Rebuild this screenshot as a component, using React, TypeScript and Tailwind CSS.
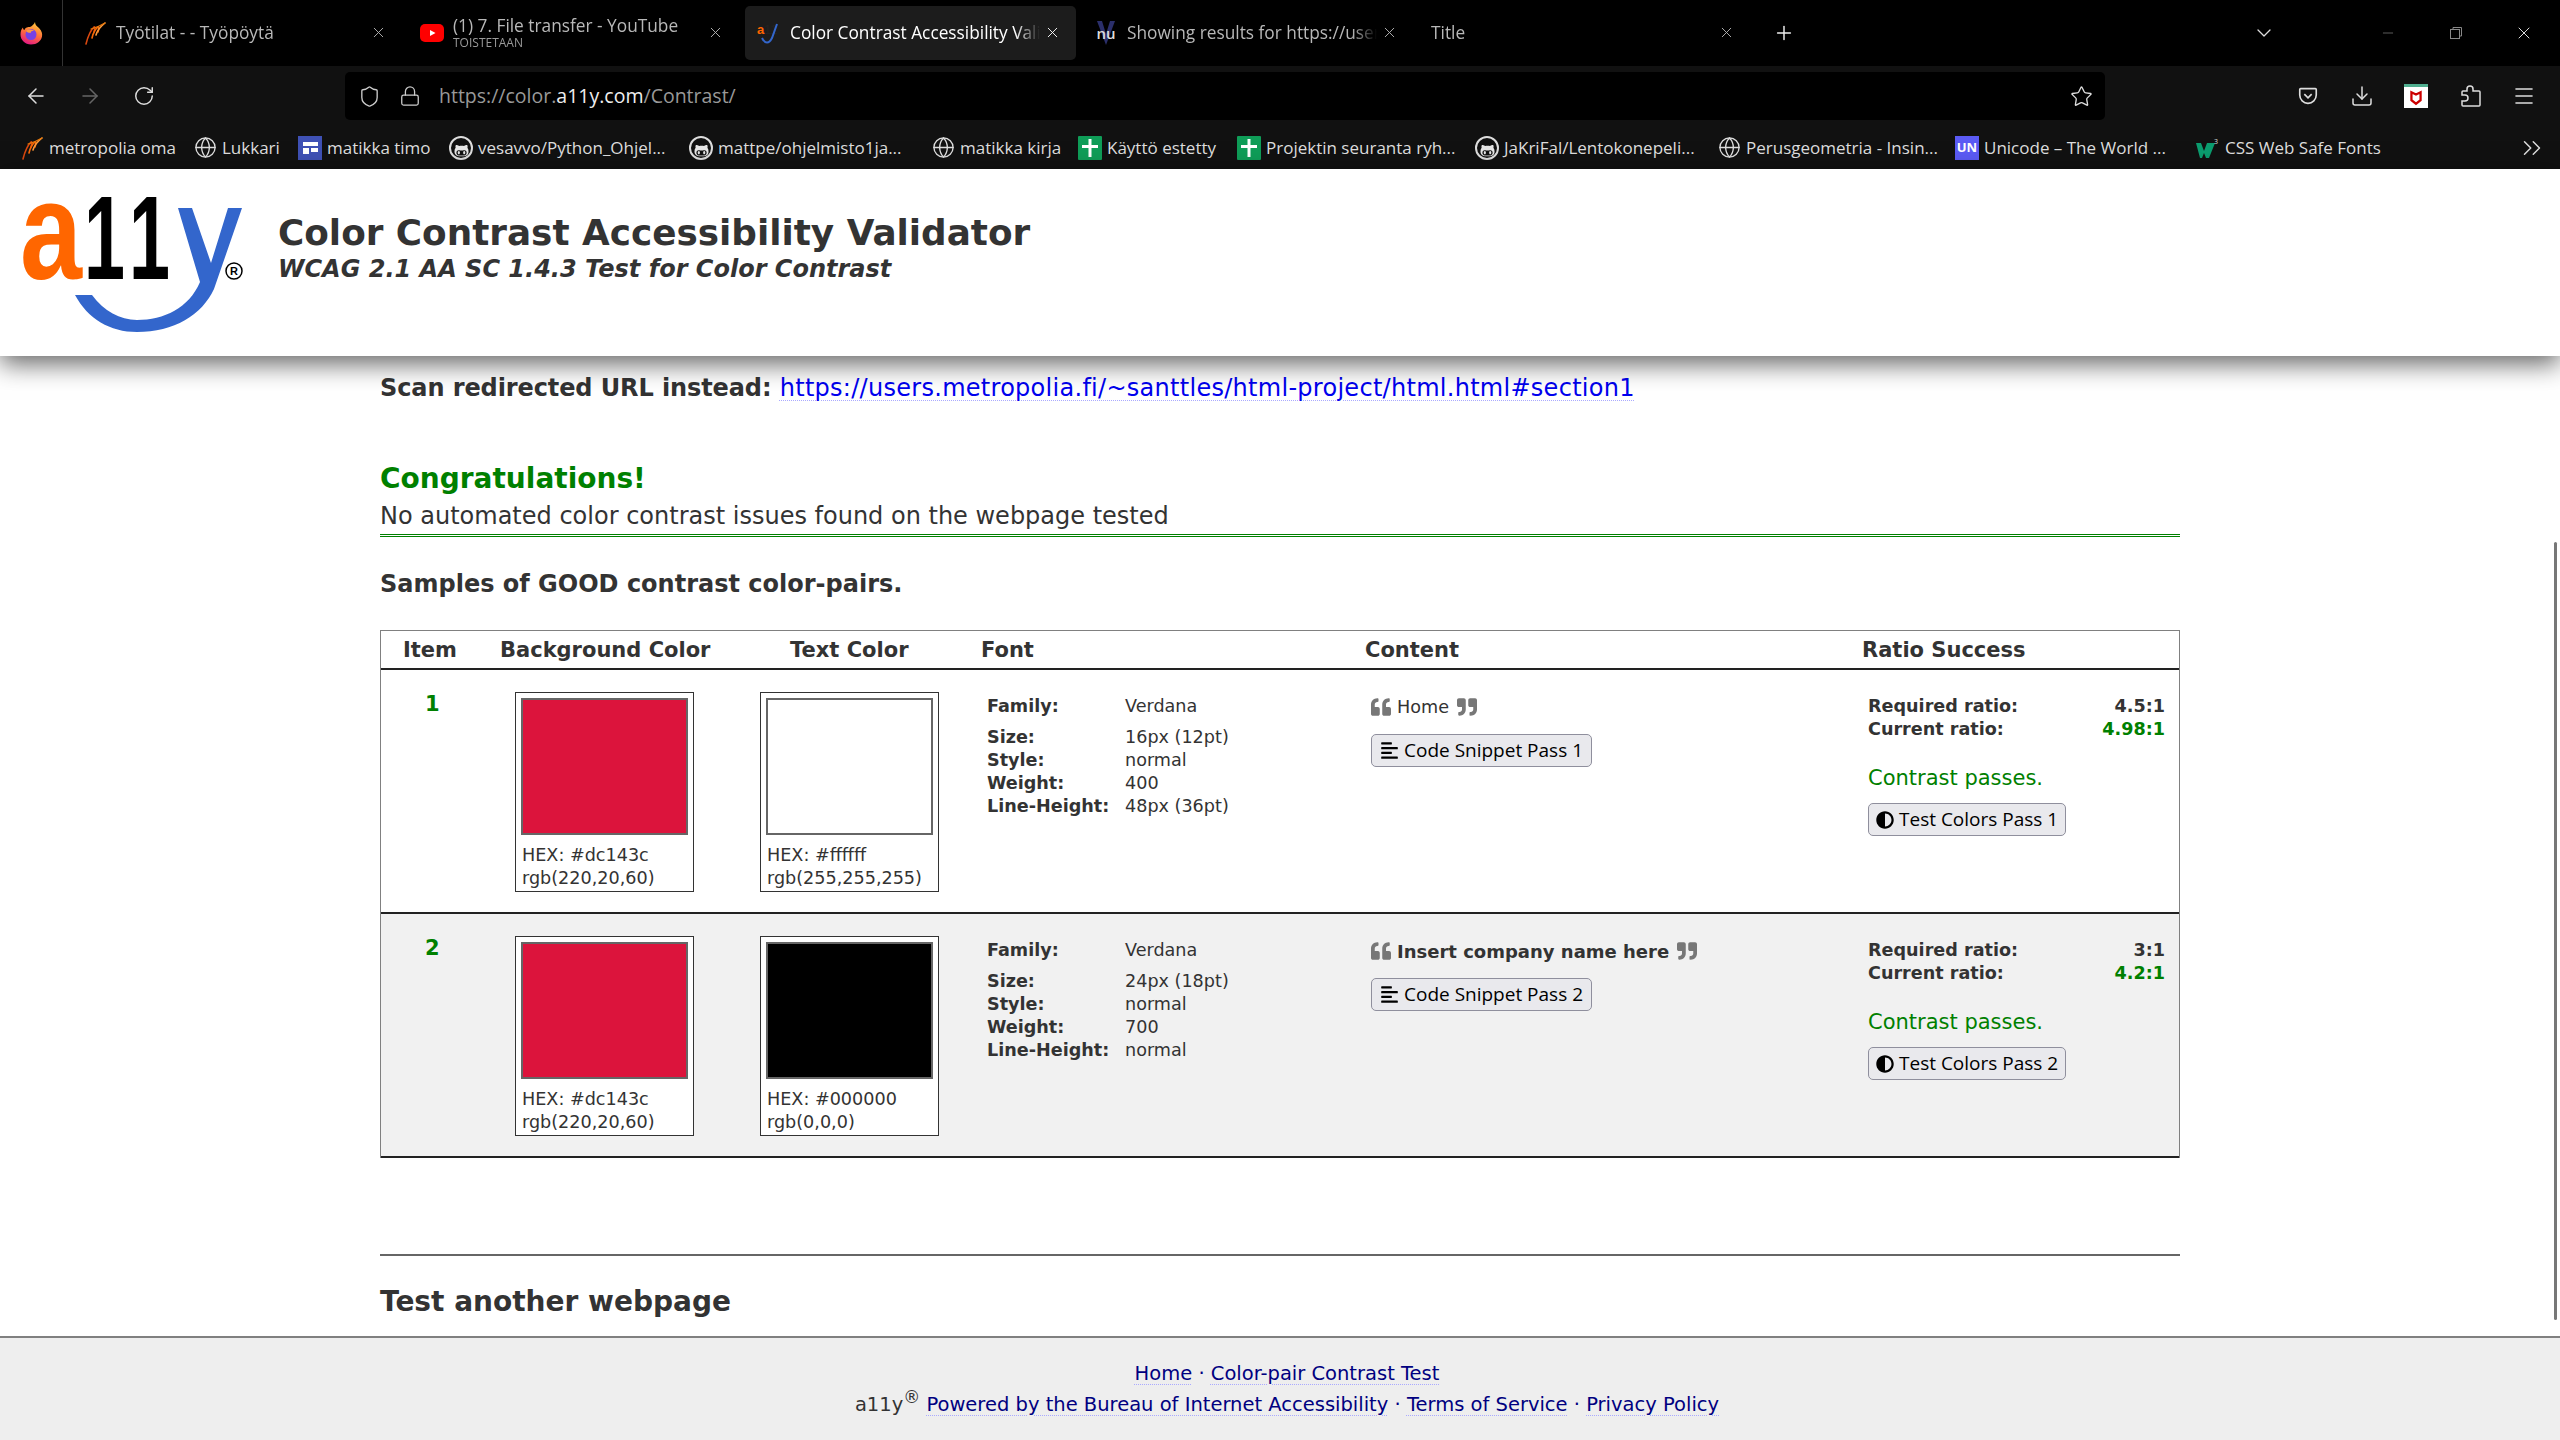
import { ArrowLeft, ArrowRight, RotateCw, Star, Lock, Shield, X, Plus, ChevronDown, Minus, ChevronsRight, Download, Menu, Globe } from "lucide-react";
import { FaQuoteLeft, FaQuoteRight, FaAlignLeft, FaAdjust, FaGithubAlt } from "react-icons/fa";

const tabs = [
  { title: "Työtilat - - Työpöytä", icon: "metro" },
  { title: "(1) 7. File transfer - YouTube", sub: "TOISTETAAN", icon: "yt" },
  { title: "Color Contrast Accessibility Validator", icon: "a11y", active: true },
  { title: "Showing results for https://users.metropolia.fi", icon: "nu" },
  { title: "Title", icon: "" },
];

const bookmarks = [
  { label: "metropolia oma", icon: "metro", w: "w-[125px]" },
  { label: "Lukkari", icon: "globe", w: "w-[56px]" },
  { label: "matikka timo", icon: "timo", w: "w-[102px]" },
  { label: "vesavvo/Python_Ohjel...", icon: "gh", w: "w-[191px]" },
  { label: "mattpe/ohjelmisto1ja...", icon: "gh", w: "w-[194px]" },
  { label: "matikka kirja", icon: "globe", w: "w-[98px]" },
  { label: "Käyttö estetty", icon: "cross", w: "w-[110px]" },
  { label: "Projektin seuranta ryh...", icon: "cross", w: "w-[189px]" },
  { label: "JaKriFal/Lentokonepeli...", icon: "gh", w: "w-[194px]" },
  { label: "Perusgeometria - Insin...", icon: "globe", w: "w-[189px]" },
  { label: "Unicode – The World ...", icon: "uni", w: "w-[192px]" },
  { label: "CSS Web Safe Fonts", icon: "w3", w: "w-[160px]" },
];

const rows = [
  {
    n: 1,
    bg: { hex: "#dc143c", rgb: "rgb(220,20,60)", cls: "bg-[#dc143c]" },
    fg: { hex: "#ffffff", rgb: "rgb(255,255,255)", cls: "bg-white" },
    size: "16px (12pt)",
    weight: "400",
    lineHeight: "48px (36pt)",
    content: "Home",
    bold: false,
    required: "4.5:1",
    current: "4.98:1",
  },
  {
    n: 2,
    bg: { hex: "#dc143c", rgb: "rgb(220,20,60)", cls: "bg-[#dc143c]" },
    fg: { hex: "#000000", rgb: "rgb(0,0,0)", cls: "bg-black" },
    size: "24px (18pt)",
    weight: "700",
    lineHeight: "normal",
    content: "Insert company name here",
    bold: true,
    required: "3:1",
    current: "4.2:1",
  },
];

function MetroIcon() {
  return (
    <svg viewBox="0 0 24 24" className="w-6 h-6 shrink-0" fill="none" strokeWidth="1.600" strokeLinecap="round">
      <path d="M3 23 C5 15 8 9 11 6 C12 5 12 8 11 11" stroke="#d9480f" />
      <path d="M9 17 C10 12 13 7 15 6 C16 5.500 16 8 15 11" stroke="#f76707" />
      <path d="M13 14 C14 10 17 6 22 2" stroke="#fd9a3c" />
      <path d="M8 8 C12 7 17 5 22 2" stroke="#e8790c" strokeWidth="1.200" />
    </svg>
  );
}

function FirefoxLogo() {
  return (
    <svg viewBox="0 0 24 24" className="w-6 h-6">
      <defs>
        <linearGradient id="ffBody" x1="0.7" y1="0" x2="0.3" y2="1">
          <stop offset="0" stopColor="#ffcb3d" />
          <stop offset="0.5" stopColor="#ff7139" />
          <stop offset="1" stopColor="#e31587" />
        </linearGradient>
      </defs>
      <path d="M16 1 C16 4 18 5 20 7 C23 10 23.500 13 23 15.500 C22 20 18 23.500 12 23.500 C6 23.500 1.500 19 1.500 13.500 C1.500 10 2.500 8 4 6.500 C4 8 4.500 9 5.500 9 C6.500 6 9 6 11 6 C13 5 15 3.500 16 1 Z" fill="url(#ffBody)" />
      <circle cx="12" cy="13.500" r="5.500" fill="#7542e5" />
      <path d="M7 10 C9 8 13 8 15 10 C12 9.500 11 11 12 12 C9 12 8 11 7 10 Z" fill="#ff9a3d" />
    </svg>
  );
}

function TabIcon({ kind }: { kind: string }) {
  if (kind === "metro") return <MetroIcon />;
  if (kind === "yt")
    return (
      <svg viewBox="0 0 24 24" className="w-6 h-6 shrink-0">
        <rect x="0" y="3" width="24" height="18" rx="5" fill="#ff0000" />
        <path d="M10 9 L15.500 12 L10 15 Z" fill="#fff" />
      </svg>
    );
  if (kind === "a11y")
    return (
      <svg viewBox="0 0 24 24" className="w-6 h-6 shrink-0">
        <text x="0" y="13" fontSize="13" fontFamily="Liberation Sans" fontWeight="700" fill="#ff6600">a</text>
        <text x="7" y="13" fontSize="13" fontFamily="Liberation Sans" fill="#222">11</text>
        <path d="M20 3 L15 17 C12 23 8 23 5 17" stroke="#3366cc" strokeWidth="2" fill="none" />
      </svg>
    );
  if (kind === "nu")
    return (
      <span className="relative w-6 h-6 shrink-0 flex items-center justify-center">
        <svg viewBox="0 0 24 24" className="absolute inset-0 w-6 h-6">
          <path d="M3 0 L12 24 L21 0 L16 0 L12 13 L8 0 Z" fill="#2b2f6b" />
        </svg>
        <span className="relative text-[15px] leading-none font-semibold text-[#ddd] [font-family:'Open_Sans',sans-serif]">nu</span>
      </span>
    );
  return null;
}

function BookmarkIcon({ kind }: { kind: string }) {
  if (kind === "metro") return <MetroIcon />;
  if (kind === "globe") return <Globe size={23} strokeWidth={1.4} className="shrink-0 text-[#ddd]" />;
  if (kind === "gh")
    return (
      <span className="w-6 h-6 shrink-0 rounded-full border-2 border-[#ddd] flex items-end justify-center overflow-hidden">
        <FaGithubAlt size={15} className="text-[#e6e6e6]" />
      </span>
    );
  if (kind === "timo")
    return (
      <span className="w-6 h-6 shrink-0 bg-[#3f51b5] flex flex-col items-center justify-center gap-[2px]">
        <span className="w-[15px] h-[4px] bg-white" />
        <span className="flex gap-[2px]">
          <span className="w-[6px] h-[6px] bg-white" />
          <span className="w-[7px] h-[4px] bg-white" />
        </span>
      </span>
    );
  if (kind === "cross")
    return (
      <svg viewBox="0 0 24 24" className="w-6 h-6 shrink-0">
        <rect width="24" height="24" rx="1" fill="#0f9d58" />
        <path d="M10.500 3h3v6H20v3h-6.500v9h-3v-9H4V9h6.500z" fill="#fff" />
      </svg>
    );
  if (kind === "uni")
    return (
      <span className="w-6 h-6 shrink-0 bg-[#5b5bf5] flex items-center justify-center text-white text-[13px] font-bold leading-none [font-family:'Open_Sans',sans-serif]">
        UN
      </span>
    );
  if (kind === "w3")
    return (
      <svg viewBox="0 0 24 24" className="w-6 h-6 shrink-0">
        <path d="M0 7 L5 7 L8 15 L11 7 L15 7 L19 7 L13 22 L10 22 L8 17 L6 22 L4 22 Z" fill="#0b9d6f" />
        <text x="18" y="8" fontSize="7" fill="#ddd" fontFamily="Open Sans">3</text>
      </svg>
    );
  return null;
}

function A11yLogo() {
  return (
    <svg viewBox="0 0 240 150" className="w-[240px] h-[150px] shrink-0">
      <text x="6" y="96" fontSize="140" fontFamily="Liberation Sans" fontWeight="700" fill="#ff6600" textLength="62" lengthAdjust="spacingAndGlyphs">a</text>
      <text x="70" y="96" fontSize="119" fontFamily="Liberation Sans" fontWeight="700" fill="#000" textLength="41" lengthAdjust="spacingAndGlyphs">1</text>
      <text x="115" y="96" fontSize="119" fontFamily="Liberation Sans" fontWeight="700" fill="#000" textLength="41" lengthAdjust="spacingAndGlyphs">1</text>
      <path d="M164 25 L178 25 L197 80 L214 25 L228 25 L200 106 C188 132 160 149 123 149 C96 149 74 136 61 112 L78 112 C90 128 106 137 123 137 C150 137 175 125 186 99 Z" fill="#3366cc" />
      <circle cx="220" cy="88" r="8" fill="none" stroke="#000" strokeWidth="1.500" />
      <text x="220" y="92" fontSize="11" fontFamily="Liberation Sans" fontWeight="700" textAnchor="middle" fill="#000">R</text>
    </svg>
  );
}

function Swatch({ hex, rgb, cls }: { hex: string; rgb: string; cls: string }) {
  return (
    <div className="w-[179px] h-[200px] bg-white border border-[#333] px-[5px] pt-[5px] text-[17.600px] text-[#333]">
      <div className={`h-[137px] border-2 border-[#666] ${cls}`} />
      <div className="mt-[9px] pl-px leading-[23px]">HEX: {hex}</div>
      <div className="pl-px leading-[23px]">{rgb}</div>
    </div>
  );
}

function Row({ row }: { row: (typeof rows)[number] }) {
  const even = row.n === 2;
  return (
    <div className={`flex h-[244px] border-b-2 border-[#222] ${even ? "bg-[#f1f1f1]" : ""}`}>
      <div className="w-[134px] pt-[20px] pl-[44px] text-[21px] font-bold text-[#008000] leading-[28px]">{row.n}</div>
      <div className="pt-[22px]">
        <Swatch {...row.bg} />
      </div>
      <div className="pt-[22px] ml-[66px]">
        <Swatch {...row.fg} />
      </div>
      <div className="w-[384px] ml-[48px] pt-[25px] text-[17.600px] leading-[23px] text-[#333]">
        <div className="flex mb-[8px]">
          <span className="w-[138px] font-bold">Family:</span>
          <span>Verdana</span>
        </div>
        <div className="flex">
          <span className="w-[138px] font-bold">Size:</span>
          <span>{row.size}</span>
        </div>
        <div className="flex">
          <span className="w-[138px] font-bold">Style:</span>
          <span>normal</span>
        </div>
        <div className="flex">
          <span className="w-[138px] font-bold">Weight:</span>
          <span>{row.weight}</span>
        </div>
        <div className="flex">
          <span className="w-[138px] font-bold">Line-Height:</span>
          <span>{row.lineHeight}</span>
        </div>
      </div>
      <div className="w-[497px] pt-[26px]">
        <div className="flex items-center gap-[6px] h-[23px] text-[17.600px] text-[#333]">
          <FaQuoteLeft size={20} className="text-[#777] -mt-[2px]" />
          <span className={row.bold ? "font-bold text-[18px]" : ""}>{row.content}</span>
          <FaQuoteRight size={20} className="text-[#777] -mt-[2px] ml-[2px]" />
        </div>
        <button className="mt-[15px] h-[33px] px-[8px] flex items-center gap-[5px] rounded-[5px] border border-[#8f8f9d] bg-[#e9e9ed] text-[19px] text-black [font-family:'Open_Sans',sans-serif]">
          <FaAlignLeft size={19} />
          Code Snippet Pass {row.n}
        </button>
      </div>
      <div className="flex-1 pt-[25px] pr-[14px] text-[17.600px] leading-[23px] text-[#333]">
        <div className="flex justify-between font-bold">
          <span>Required ratio:</span>
          <span>{row.required}</span>
        </div>
        <div className="flex justify-between font-bold">
          <span>Current ratio:</span>
          <span className="text-[#008000]">{row.current}</span>
        </div>
        <div className="mt-[23px] text-[21px] leading-[28px] text-[#008000]">Contrast passes.</div>
        <button className="mt-[11px] h-[33px] px-[7px] flex items-center gap-[5px] rounded-[5px] border border-[#8f8f9d] bg-[#e9e9ed] text-[19px] text-black [font-family:'Open_Sans',sans-serif]">
          <FaAdjust size={18} />
          Test Colors Pass {row.n}
        </button>
      </div>
    </div>
  );
}

export default function App() {
  return (
    <div className="relative h-[1440px] w-[2560px] overflow-hidden bg-white flex flex-col [font-family:'DejaVu_Sans',Verdana,sans-serif]">
      {/* browser chrome */}
      <div className="h-[169px] shrink-0 bg-[#111] text-[#ddd] [font-family:'Open_Sans',sans-serif]">
        <div className="h-[66px] bg-black flex items-center relative">
          <div className="w-[63px] h-full border-r border-[#333] flex items-center justify-center">
            <FirefoxLogo />
          </div>
          <div className="flex ml-[8px] gap-[6px]">
            {tabs.map((t) => (
              <div
                key={t.title}
                className={`relative w-[331px] h-[54px] rounded-[5px] flex items-center pl-[12px] gap-[9px] ${t.active ? "bg-[#1c1c1c] text-white" : "text-[#b8b8b8]"}`}
              >
                {t.icon && <TabIcon kind={t.icon} />}
                <div className="w-[250px] overflow-hidden whitespace-nowrap [mask-image:linear-gradient(to_right,black_90%,transparent)]">
                  <div className="text-[17.300px] leading-[20px]">{t.title}</div>
                  {t.sub && <div className="text-[12px] leading-[14px] text-[#9a9a9a]">{t.sub}</div>}
                </div>
                <X size={17} strokeWidth={1.3} className="absolute right-[15px] top-[18px]" />
              </div>
            ))}
          </div>
          <Plus size={22} strokeWidth={1.6} className="ml-[23px] text-[#eee]" />
          <ChevronDown size={24} strokeWidth={1.3} className="ml-[457px]" />
          <Minus size={16} strokeWidth={1} className="ml-[104px] text-[#888]" />
          <svg viewBox="0 0 16 16" className="w-4 h-4 ml-[52px] text-[#888]" fill="none" stroke="currentColor">
            <rect x="2.500" y="4.500" width="9" height="9" />
            <path d="M5 4 V2.500 H13.500 V11 H12" />
          </svg>
          <X size={20} strokeWidth={1.2} className="ml-[50px] text-[#ddd]" />
        </div>

        <div className="h-[60px] flex items-center">
          <ArrowLeft size={24} strokeWidth={1.5} className="ml-[24px]" />
          <ArrowRight size={24} strokeWidth={1.5} className="ml-[30px] text-[#666]" />
          <RotateCw size={22} strokeWidth={1.6} className="ml-[31px]" />
          <div className="ml-[190px] w-[1760px] h-[48px] rounded-[5px] bg-black flex items-center pl-[13px] pr-[12px] text-[19.500px] text-[#999]">
            <Shield size={23} strokeWidth={1.4} className="text-[#ccc]" />
            <Lock size={22} strokeWidth={1.4} className="ml-[18px] text-[#ccc]" />
            <span className="ml-[18px]">
              https://color.<span className="text-[#eee]">a11y.com</span>/Contrast/
            </span>
            <Star size={23} strokeWidth={1.4} className="ml-auto text-[#ddd]" />
          </div>
          <svg viewBox="0 0 24 24" className="w-[22px] h-[22px] ml-[192px]" fill="none" stroke="#ddd" strokeWidth="1.800">
            <path d="M4 4h16a1 1 0 0 1 1 1v6a9 9 0 0 1-18 0V5a1 1 0 0 1 1-1z" />
            <path d="M8 10l4 4 4-4" />
          </svg>
          <Download size={24} strokeWidth={1.5} className="ml-[31px]" />
          <span className="ml-[30px] w-6 h-6 bg-white border-t-[3px] border-[#4fae8f] flex items-center justify-center">
            <svg viewBox="0 0 14 14" className="w-4 h-4">
              <path d="M3 2v7l4 3 4-3V2L7 4z" fill="none" stroke="#c00" strokeWidth="2" />
            </svg>
          </span>
          <svg viewBox="0 0 24 24" className="w-6 h-6 ml-[31px]" fill="none" stroke="#ddd" strokeWidth="1.500">
            <path d="M8 7 V5 a3 3 0 0 1 6 0 V7 H20 a1 1 0 0 1 1 1 V21 a1 1 0 0 1-1 1 H4 a1 1 0 0 1-1-1 V17 H6 a3 3 0 0 0 0-6 H3 V8 a1 1 0 0 1 1-1 Z" />
          </svg>
          <Menu size={24} strokeWidth={1.6} className="ml-[29px]" />
        </div>

        <div className="h-[43px] flex items-center pl-[20px] gap-[20px] text-[17px] text-[#ddd]">
          {bookmarks.map((b) => (
            <div key={b.label} className="flex items-center gap-[5px]">
              <BookmarkIcon kind={b.icon} />
              <span className={`${b.w} whitespace-nowrap`}>{b.label}</span>
            </div>
          ))}
          <ChevronsRight size={30} strokeWidth={1.2} className="ml-[112px]" />
        </div>
      </div>

      {/* site header */}
      <header className="relative z-10 h-[187px] shrink-0 bg-white shadow-[0_8px_24px_rgba(0,0,0,0.6)] flex">
        <div className="pl-[14px] pt-[14px]">
          <A11yLogo />
        </div>
        <div className="ml-[24px] pt-[40px] text-[#333] font-bold">
          <h1 className="text-[35.800px] leading-[48px]">Color Contrast Accessibility Validator</h1>
          <p className="text-[24px] leading-[24px] italic">WCAG 2.1 AA SC 1.4.3 Test for Color Contrast</p>
        </div>
      </header>

      {/* main content */}
      <main className="flex-1 min-h-0 pl-[380px] w-[2180px] text-[#333]">
        <p className="mt-[15px] text-[24px] leading-[34px] font-bold tracking-[-0.1px]">
          Scan redirected URL instead:{" "}
          <a className="font-normal tracking-[0.28px] text-[#0000ee] underline decoration-dotted decoration-1 decoration-[#aaaaff] underline-offset-4">
            https://users.metropolia.fi/~santtles/html-project/html.html#section1
          </a>
        </p>
        <h2 className="mt-[55px] text-[28px] leading-[38px] font-bold text-[#008000]">Congratulations!</h2>
        <p className="text-[24px] leading-[36px] border-b-[3px] border-double border-[#008000] h-[39px]">
          No automated color contrast issues found on the webpage tested
        </p>
        <h3 className="mt-[30px] text-[24px] leading-[34px] font-bold">Samples of GOOD contrast color-pairs.</h3>

        <div className="mt-[29px] border border-[#808080] border-b-0">
          <div className="flex items-center h-[39px] pt-[3px] border-b-2 border-[#222] text-[21px] font-bold">
            <span className="ml-[22px] w-[97px]">Item</span>
            <span className="w-[290px]">Background Color</span>
            <span className="w-[191px]">Text Color</span>
            <span className="w-[384px]">Font</span>
            <span className="w-[497px]">Content</span>
            <span>Ratio Success</span>
          </div>
          {rows.map((r) => (
            <Row key={r.n} row={r} />
          ))}
        </div>

        <hr className="mt-[96px] border-0 h-[2px] bg-[#666]" />
        <h2 className="mt-[28px] text-[28px] leading-[36px] font-bold">Test another webpage</h2>
      </main>

      {/* footer */}
      <footer className="h-[104px] shrink-0 bg-[#eee] border-t-2 border-[#808080] pl-[14px] pt-[20px] text-center text-[19.500px] leading-[31px] text-[#333]">
        <div className="text-[#000080]">
          <a className="underline decoration-dotted decoration-1 decoration-[#aaaaff] underline-offset-4">Home</a> ·{" "}
          <a className="underline decoration-dotted decoration-1 decoration-[#aaaaff] underline-offset-4">Color-pair Contrast Test</a>
        </div>
        <div>
          a11y<sup className="text-[17px] leading-none">®</sup>{" "}
          <span className="text-[#000080]">
            <a className="underline decoration-dotted decoration-1 decoration-[#aaaaff] underline-offset-4">Powered by the Bureau of Internet Accessibility</a> ·{" "}
            <a className="underline decoration-dotted decoration-1 decoration-[#aaaaff] underline-offset-4">Terms of Service</a> ·{" "}
            <a className="underline decoration-dotted decoration-1 decoration-[#aaaaff] underline-offset-4">Privacy Policy</a>
          </span>
        </div>
      </footer>

      {/* overlay scrollbar */}
      <div className="absolute left-[2554px] top-[542px] w-[3px] h-[778px] rounded-full bg-[#777]" />
    </div>
  );
}
